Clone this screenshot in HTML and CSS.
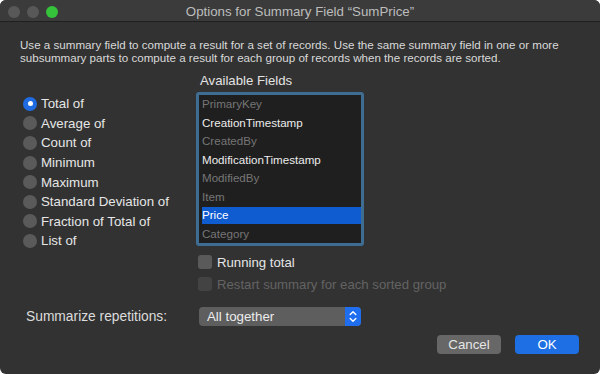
FILE: index.html
```html
<!DOCTYPE html>
<html>
<head>
<meta charset="utf-8">
<link rel="stylesheet" href="styles.css">
</head>
<body>
<div class="window">
  <div class="titlebar">
    <div class="lights">
      <span class="light gray"></span>
      <span class="light gray"></span>
      <span class="light green"></span>
    </div>
    <div class="title">Options for Summary Field “SumPrice”</div>
    <div></div>
  </div>
  <div class="content">
    <p class="desc">Use a summary field to compute a result for a set of records. Use the same summary field in one or more<br>subsummary parts to compute a result for each group of records when the records are sorted.</p>
    <div class="main">
      <div class="radios">
        <div class="radio-row"><span class="radio on"><span class="dot"></span></span><span>Total of</span></div>
        <div class="radio-row"><span class="radio"></span><span>Average of</span></div>
        <div class="radio-row"><span class="radio"></span><span>Count of</span></div>
        <div class="radio-row"><span class="radio"></span><span>Minimum</span></div>
        <div class="radio-row"><span class="radio"></span><span>Maximum</span></div>
        <div class="radio-row"><span class="radio"></span><span>Standard Deviation of</span></div>
        <div class="radio-row"><span class="radio"></span><span>Fraction of Total of</span></div>
        <div class="radio-row"><span class="radio"></span><span>List of</span></div>
      </div>
      <div class="fields">
        <div class="heading">Available Fields</div>
        <div class="listbox">
          <div class="item dim">PrimaryKey</div>
          <div class="item">CreationTimestamp</div>
          <div class="item dim">CreatedBy</div>
          <div class="item">ModificationTimestamp</div>
          <div class="item dim">ModifiedBy</div>
          <div class="item dim">Item</div>
          <div class="item sel">Price</div>
          <div class="item dim">Category</div>
        </div>
        <div class="check-row"><span class="box"></span><span>Running total</span></div>
        <div class="check-row disabled"><span class="box"></span><span>Restart summary for each sorted group</span></div>
      </div>
    </div>
    <div class="rep-row">
      <div class="rep-label">Summarize repetitions:</div>
      <div class="popup">
        <span class="popup-text">All together</span>
        <span class="stepper">
          <svg width="16" height="19" viewBox="0 0 16 19"><path d="M5.2 7.6 L8 4.8 L10.8 7.6" fill="none" stroke="#fff" stroke-width="1.4" stroke-linecap="round" stroke-linejoin="round"/><path d="M5.2 11.4 L8 14.2 L10.8 11.4" fill="none" stroke="#fff" stroke-width="1.4" stroke-linecap="round" stroke-linejoin="round"/></svg>
        </span>
      </div>
    </div>
    <div class="buttons">
      <div class="btn cancel">Cancel</div>
      <div class="btn ok">OK</div>
    </div>
  </div>
</div>
</body>
</html>
```
FILE: styles.css
```css
html, body {
  margin: 0;
  padding: 0;
  background: #ffffff;
}
body {
  font-family: "Liberation Sans", Arial, sans-serif;
}
.window {
  width: 600px;
  height: 374px;
  background: #323232;
  border-radius: 6px;
  overflow: hidden;
  display: flex;
  flex-direction: column;
}
.titlebar {
  height: 21px;
  border-bottom: 1px solid #1f1f1f;
  background: #3b3b3b;
  display: grid;
  grid-template-columns: 1fr auto 1fr;
  align-items: center;
}
.lights {
  display: flex;
  gap: 7px;
  padding-left: 8px;
  padding-top: 1px;
}
.light {
  width: 12px;
  height: 12px;
  border-radius: 50%;
}
.light.gray { background: #585858; }
.light.green { background: #35c33b; }
.title {
  color: #bdbdbd;
  font-size: 13.3px;
  line-height: 21px;
  padding-top: 1px;
}
.content {
  padding: 16px 20px 0 20px;
}
.desc {
  margin: 0;
  color: #d9d9d9;
  font-size: 11.6px;
  line-height: 13px;
  white-space: nowrap;
}
.main {
  display: flex;
  margin-top: 9px;
}
.radios {
  width: 173px;
  margin-left: 3px;
  padding-top: 21px;
}
.radio-row {
  height: 19.6px;
  display: flex;
  align-items: center;
  gap: 4px;
  color: #e6e6e6;
  font-size: 13.3px;
}
.radio {
  width: 14px;
  height: 14px;
  border-radius: 50%;
  background: #5a5a5a;
  flex: none;
  display: flex;
  align-items: center;
  justify-content: center;
}
.radio.on {
  background: #1f6ce2;
}
.dot {
  width: 5px;
  height: 5px;
  border-radius: 50%;
  background: #ffffff;
}
.fields {
  display: flex;
  flex-direction: column;
}
.heading {
  color: #e3e3e3;
  font-size: 13.2px;
  line-height: 16px;
  padding-left: 4px;
}
.listbox {
  margin-top: 3px;
  width: 162px;
  height: 148px;
  border: 3px solid #3f6c91;
  border-radius: 3px;
  background: #1f1f1f;
}
.item {
  height: 18.5px;
  line-height: 18.5px;
  padding-left: 3px;
  font-size: 11.6px;
  color: #ececec;
}
.item.dim { color: #767676; }
.item.sel {
  color: #ffffff;
  background: #0f5cd1;
  background-clip: content-box;
  padding-top: 1px;
  padding-bottom: 1px;
  height: 16.5px;
  line-height: 16.5px;
}
.check-row {
  margin-left: 2px;
  height: 22px;
  display: flex;
  align-items: center;
  gap: 5px;
  color: #e6e6e6;
  font-size: 13.2px;
}
.listbox + .check-row { margin-top: 5px; }
.box {
  width: 14px;
  height: 14px;
  border-radius: 3px;
  background: #5a5a5a;
  flex: none;
}
.check-row.disabled { color: #636363; }
.check-row.disabled .box { background: #434343; }
.rep-row {
  display: flex;
  align-items: center;
  margin-top: 12px;
  height: 19px;
}
.rep-label {
  width: 173px;
  padding-left: 6px;
  color: #dcdcdc;
  font-size: 13.8px;
}
.popup {
  width: 162px;
  height: 19px;
  border-radius: 4px;
  background: #5e5e5e;
  display: flex;
  align-items: center;
  justify-content: space-between;
  overflow: hidden;
}
.popup-text {
  padding-left: 8px;
  color: #ececec;
  font-size: 13.3px;
}
.stepper {
  width: 16px;
  height: 19px;
  background: #1f6ef0;
  display: flex;
}
.buttons {
  display: flex;
  justify-content: flex-end;
  gap: 14px;
  margin-top: 9px;
  padding-right: 1px;
}
.btn {
  width: 64px;
  height: 19px;
  line-height: 19px;
  text-align: center;
  border-radius: 4px;
  font-size: 13.3px;
}
.btn.cancel {
  background: #676767;
  color: #e6e6e6;
}
.btn.ok {
  background: #1d6fe3;
  color: #ffffff;
}
```
